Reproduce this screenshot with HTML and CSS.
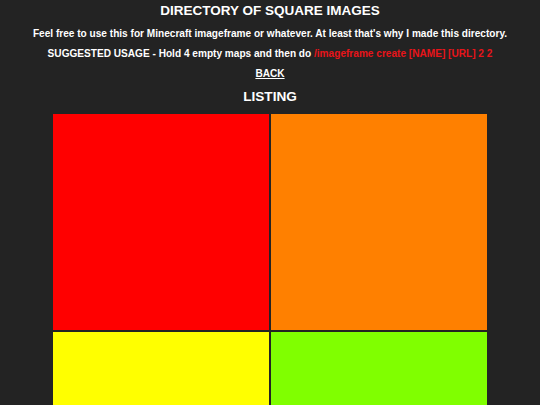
FILE: index.html
```html
<!DOCTYPE html>
<html>
<head>
<meta charset="utf-8">
<link rel="stylesheet" href="styles.css">
</head>
<body>
<div class="page">
  <h1 class="title">DIRECTORY OF SQUARE IMAGES</h1>
  <p class="line first">Feel free to use this for Minecraft imageframe or whatever. At least that's why I made this directory.</p>
  <p class="line">SUGGESTED USAGE - Hold 4 empty maps and then do <span class="cmd">/imageframe create [NAME] [URL] 2 2</span></p>
  <p class="line"><a class="back" href="#">BACK</a></p>
  <h2 class="title listing">LISTING</h2>
  <div class="grid">
    <div class="sq red"></div>
    <div class="sq orange"></div>
    <div class="sq yellow"></div>
    <div class="sq lime"></div>
  </div>
</div>
</body>
</html>
```
FILE: styles.css
```css
html, body {
  margin: 0;
  padding: 0;
  background: #232323;
}
.page {
  display: flex;
  flex-direction: column;
  align-items: center;
  font-family: "Liberation Sans", Arial, sans-serif;
  font-weight: bold;
  color: #fff;
  padding-top: 1px;
}
.title {
  margin: 0;
  font-size: 13.5px;
  line-height: 20px;
}
.line {
  margin: 0;
  font-size: 10.1px;
  line-height: 20px;
}
.line.first { margin-top: 2.5px; }
.cmd { color: #e8141a; }
.back { color: #fff; text-decoration: underline; }
.listing {
  font-size: 13.6px;
  margin-top: 3.7px;
  margin-bottom: 6.8px;
}
.grid {
  display: grid;
  grid-template-columns: 216px 216px;
  grid-auto-rows: 216px;
  gap: 2px;
}
.red { background: #ff0000; }
.orange { background: #ff8000; }
.yellow { background: #ffff00; }
.lime { background: #80ff00; }
```
